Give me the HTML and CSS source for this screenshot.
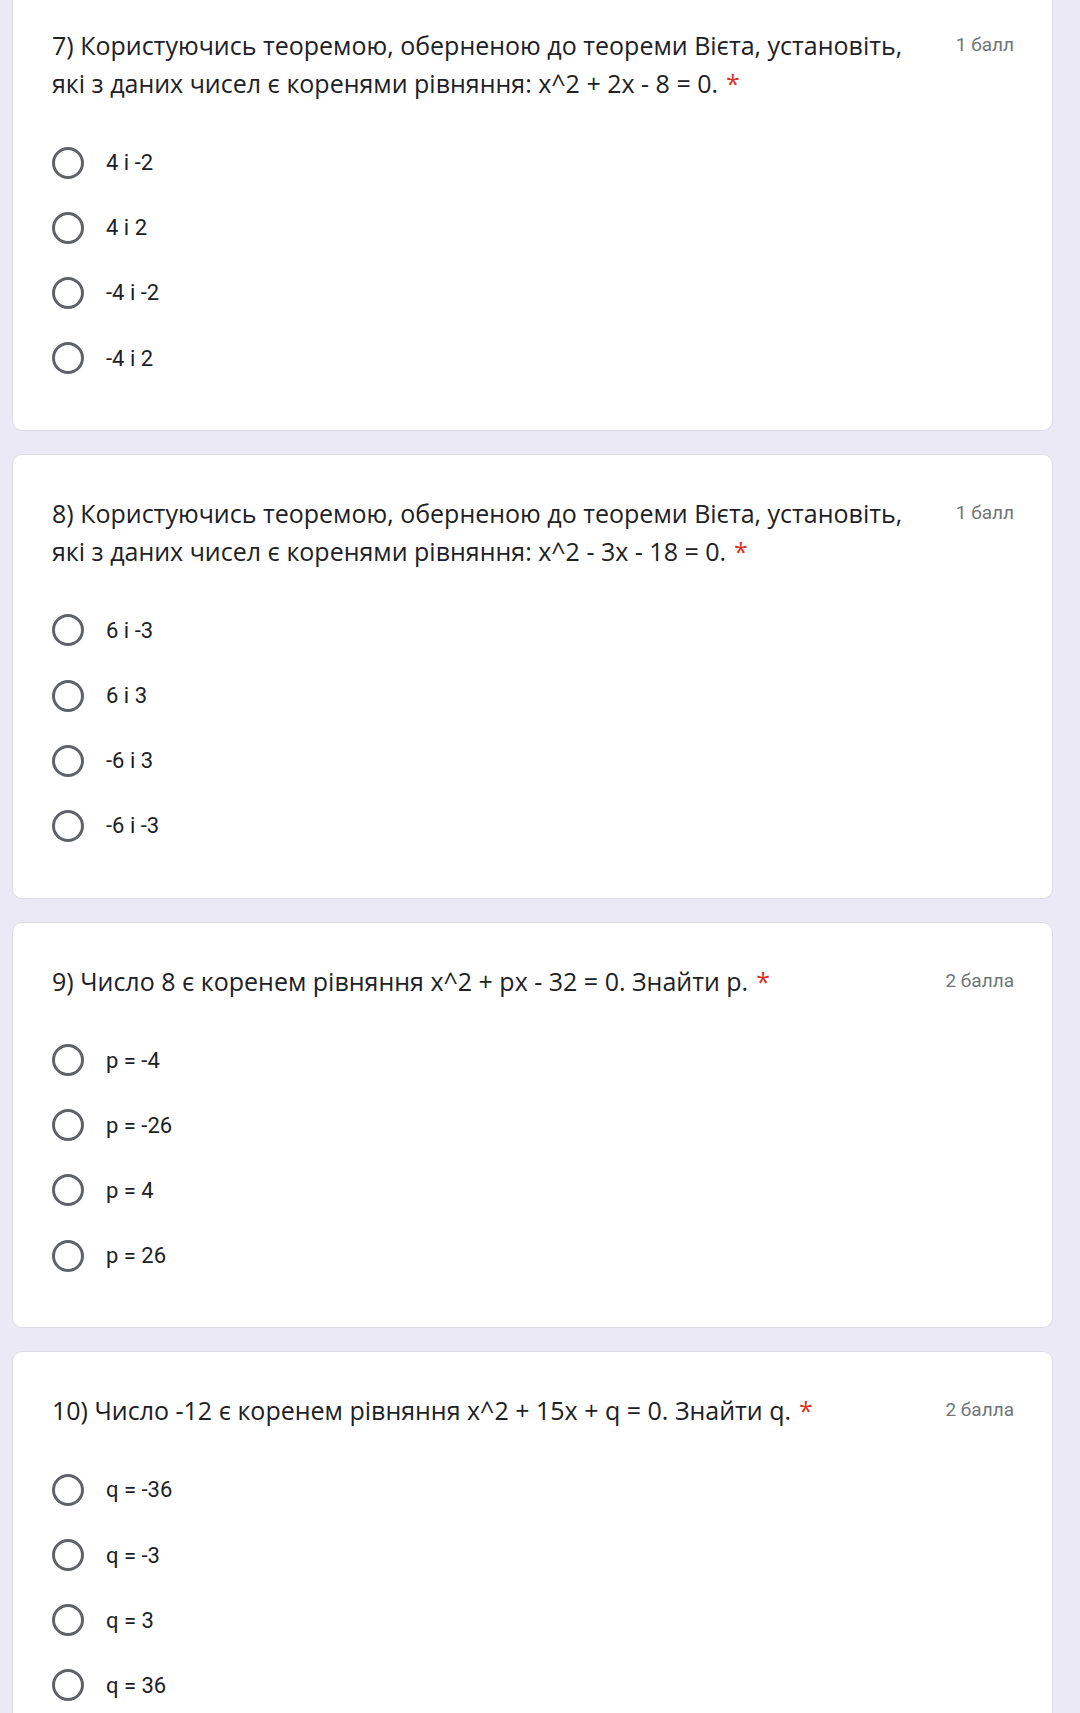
FILE: index.html
```html
<!DOCTYPE html>
<html lang="uk">
<head>
<meta charset="utf-8">
<title>Форма</title>
<link rel="stylesheet" href="styles.css">
</head>
<body>
<main class="list">
  <section class="card">
    <div class="head">
      <p class="question">7) Користуючись теоремою, оберненою до теореми Вієта, установіть, які з даних чисел є коренями рівняння: x^2 + 2x - 8 = 0.<span class="req">*</span></p>
      <span class="points">1 балл</span>
    </div>
    <ul class="options">
      <li class="option"><span class="radio"></span><span class="label">4 і -2</span></li>
      <li class="option"><span class="radio"></span><span class="label">4 і 2</span></li>
      <li class="option"><span class="radio"></span><span class="label">-4 і -2</span></li>
      <li class="option"><span class="radio"></span><span class="label">-4 і 2</span></li>
    </ul>
  </section>
  <section class="card">
    <div class="head">
      <p class="question">8) Користуючись теоремою, оберненою до теореми Вієта, установіть, які з даних чисел є коренями рівняння: x^2 - 3x - 18 = 0.<span class="req">*</span></p>
      <span class="points">1 балл</span>
    </div>
    <ul class="options">
      <li class="option"><span class="radio"></span><span class="label">6 і -3</span></li>
      <li class="option"><span class="radio"></span><span class="label">6 і 3</span></li>
      <li class="option"><span class="radio"></span><span class="label">-6 і 3</span></li>
      <li class="option"><span class="radio"></span><span class="label">-6 і -3</span></li>
    </ul>
  </section>
  <section class="card">
    <div class="head">
      <p class="question">9) Число 8 є коренем рівняння x^2 + px - 32 = 0. Знайти р.<span class="req">*</span></p>
      <span class="points">2 балла</span>
    </div>
    <ul class="options">
      <li class="option"><span class="radio"></span><span class="label">p = -4</span></li>
      <li class="option"><span class="radio"></span><span class="label">p = -26</span></li>
      <li class="option"><span class="radio"></span><span class="label">p = 4</span></li>
      <li class="option"><span class="radio"></span><span class="label">p = 26</span></li>
    </ul>
  </section>
  <section class="card">
    <div class="head">
      <p class="question">10) Число -12 є коренем рівняння x^2 + 15x + q = 0. Знайти q.<span class="req">*</span></p>
      <span class="points">2 балла</span>
    </div>
    <ul class="options">
      <li class="option"><span class="radio"></span><span class="label">q = -36</span></li>
      <li class="option"><span class="radio"></span><span class="label">q = -3</span></li>
      <li class="option"><span class="radio"></span><span class="label">q = 3</span></li>
      <li class="option"><span class="radio"></span><span class="label">q = 36</span></li>
    </ul>
  </section>
</main>
</body>
</html>
```
FILE: styles.css
```css
html, body {
  margin: 0;
  padding: 0;
}
body {
  background: #ece9f7;
  font-family: Roboto, "Noto Sans", sans-serif;
  color: #202124;
  overflow: hidden;
}
.list {
  display: flex;
  flex-direction: column;
  gap: 23px;
  margin-top: -14px;
  padding: 0 27px 0 12px;
}
.card {
  background: #fff;
  border: 1px solid #dedbe8;
  border-radius: 10px;
  padding: 39px 38px 39px 39px;
}
.head {
  display: flex;
  align-items: flex-start;
  gap: 30px;
}
.question {
  flex: 1;
  margin: 0;
  font-family: "Open Sans", Roboto, sans-serif;
  font-size: 25px;
  line-height: 38px;
  color: #202124;
}
.req {
  color: #d93025;
  margin-left: 8px;
}
.points {
  flex-shrink: 0;
  font-family: Roboto, sans-serif;
  font-size: 19px;
  line-height: 38px;
  color: #70757a;
}
.options {
  list-style: none;
  margin: 28px 0 0;
  padding: 0;
}
.option {
  display: flex;
  align-items: center;
  height: 65.2px;
  gap: 22px;
}
.radio {
  width: 26px;
  height: 26px;
  border: 3px solid #5f6368;
  border-radius: 50%;
  flex-shrink: 0;
}
.label {
  font-family: Roboto, sans-serif;
  font-size: 22px;
  color: #202124;
}
```
